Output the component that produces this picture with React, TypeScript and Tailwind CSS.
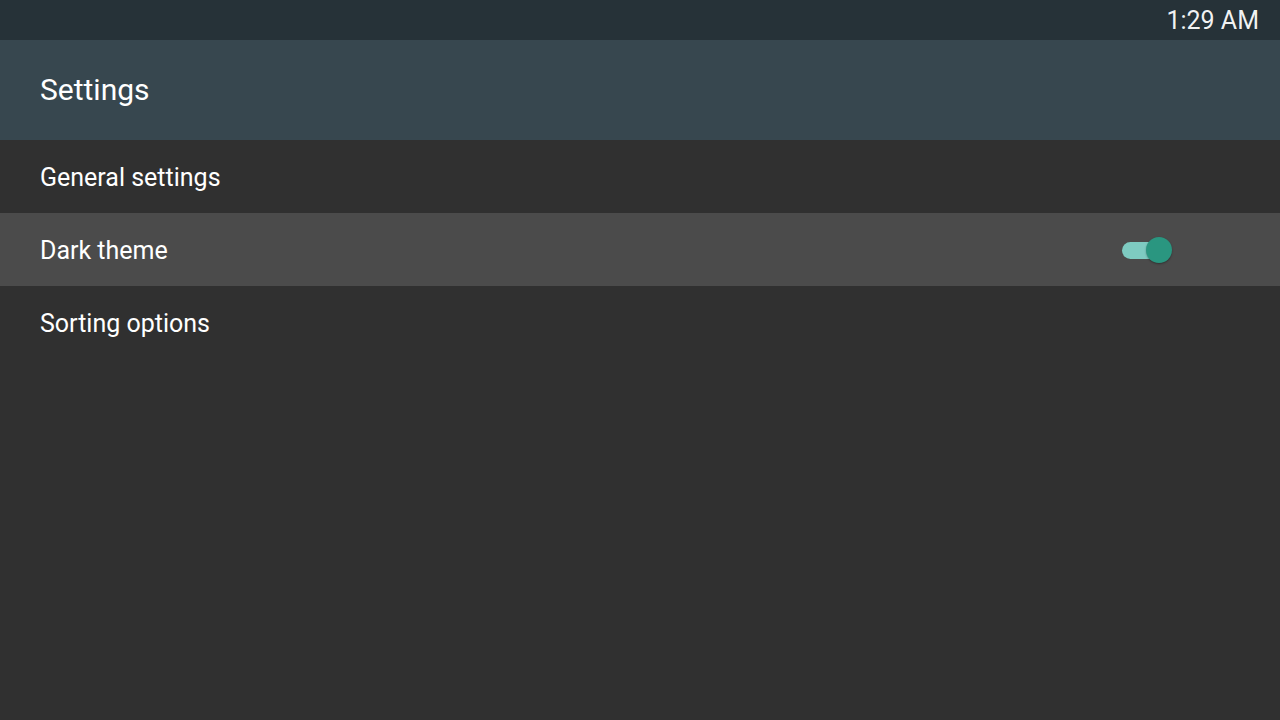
const items = [
  { label: "General settings", active: false, toggle: false },
  { label: "Dark theme", active: true, toggle: true },
  { label: "Sorting options", active: false, toggle: false },
];

function Toggle() {
  return (
    <div className="relative h-[26px] w-[52px]">
      <div className="absolute left-[1px] top-[5px] h-[17px] w-[40px] rounded-full bg-[#7ecbc1]" />
      <div className="absolute left-[25px] top-0 h-[26px] w-[26px] rounded-full bg-[#2a9680] shadow-[0_1px_2px_rgba(0,0,0,0.35)]" />
    </div>
  );
}

export default function App() {
  return (
    <div className="flex h-[720px] w-[1280px] flex-col bg-[#303030] font-['Roboto',sans-serif] text-white">
      {/* status bar */}
      <div className="flex h-[40px] items-center justify-end bg-[#263238] pr-[21px]">
        <span className="text-[25px] leading-none text-white/95">1:29 AM</span>
      </div>

      {/* toolbar */}
      <div className="flex h-[100px] items-center bg-[#37474f] px-[40px]">
        <h1 className="text-[30px] leading-none">Settings</h1>
      </div>

      {/* list */}
      <div className="flex flex-col">
        {items.map((it) => (
          <div
            key={it.label}
            className={
              it.active
                ? "flex h-[73px] items-center justify-between bg-[#4b4b4b] pl-[40px] pr-[107px]"
                : "flex h-[73px] items-center justify-between pl-[40px] pr-[107px]"
            }
          >
            <span className="pt-[2px] text-[25px] leading-none">{it.label}</span>
            {it.toggle && <Toggle />}
          </div>
        ))}
      </div>
    </div>
  );
}
